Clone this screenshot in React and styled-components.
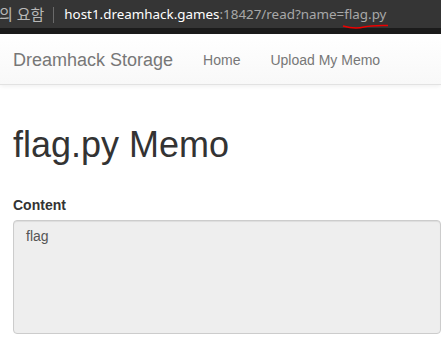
import React from 'react';
import styled, { createGlobalStyle } from 'styled-components';

const GlobalStyle = createGlobalStyle`
  html, body {
    margin: 0;
    padding: 0;
    background: #fff;
    overflow: hidden;
  }
  body {
    font-family: "Liberation Sans", Arial, sans-serif;
    font-size: 14px;
    line-height: 1.42857;
    color: #333;
  }
`;

const AddressBar = styled.div`
  box-sizing: border-box;
  height: 34px;
  padding: 1px 0 6px;
  background: linear-gradient(to bottom, #353535 0, #353535 28px, #1b1b1b 28px, #1b1b1b 100%);
  display: flex;
  align-items: center;
  font-family: "Noto Sans", "Noto Sans CJK KR", sans-serif;
  font-size: 13.4px;
  white-space: nowrap;
  overflow: hidden;
`;

const Hint = styled.span`
  color: #b8b8b8;
  font-size: 15px;
  margin-left: -1px;
`;

const Divider = styled.span`
  width: 1px;
  height: 16px;
  background: #6a6a6a;
  margin: 0 10px 0 9px;
`;

const Host = styled.span`
  color: #fff;
`;

const Path = styled.span`
  color: #a8a8a8;
`;

const Marked = styled.span`
  position: relative;
  color: #a8a8a8;

  svg {
    position: absolute;
    left: -2px;
    top: 19px;
  }
`;

const Navbar = styled.nav`
  box-sizing: border-box;
  height: 51px;
  padding: 1px 0 0 13px;
  background: linear-gradient(to bottom, #fff 0%, #f8f8f8 100%);
  border-bottom: 1px solid #e2e2e2;
  box-shadow: 0 1px 5px rgba(0, 0, 0, 0.075);
  display: flex;
  align-items: center;
`;

const Brand = styled.a`
  font-size: 18px;
  line-height: 20px;
  color: #777;
  padding-right: 15px;
  text-decoration: none;
`;

const NavLink = styled.a`
  padding: 15px;
  line-height: 20px;
  color: #777;
  text-decoration: none;
`;

const Container = styled.div`
  padding: 40px 0 0 13px;
`;

const Title = styled.h1`
  font-size: 36px;
  font-weight: 500;
  line-height: 1.1;
  margin: 0 0 31px;
  color: #333;
`;

const Label = styled.label`
  display: block;
  font-weight: bold;
  margin-bottom: 4px;
`;

const ContentBox = styled.div`
  box-sizing: border-box;
  width: 428px;
  height: 114px;
  padding: 6px 12px;
  background: #eee;
  border: 1px solid #ccc;
  border-radius: 4px;
  box-shadow: inset 0 1px 1px rgba(0, 0, 0, 0.075);
  color: #555;
`;

export default function App() {
  return (
    <>
      <GlobalStyle />
      <AddressBar>
        <Hint>의 요함</Hint>
        <Divider />
        <Host>host1.dreamhack.games</Host>
        <Path>:18427/read?name=</Path>
        <Marked>
          flag.py
          <svg width="48" height="6" viewBox="0 0 48 6">
            <path d="M1 2 C8 4 14 5 22 3 C30 1 38 1.5 46 1.5" fill="none" stroke="#e00" strokeWidth="1.6" />
          </svg>
        </Marked>
      </AddressBar>
      <Navbar>
        <Brand href="#">Dreamhack Storage</Brand>
        <NavLink href="#">Home</NavLink>
        <NavLink href="#">Upload My Memo</NavLink>
      </Navbar>
      <Container>
        <Title>flag.py Memo</Title>
        <Label>Content</Label>
        <ContentBox>flag</ContentBox>
      </Container>
    </>
  );
}
